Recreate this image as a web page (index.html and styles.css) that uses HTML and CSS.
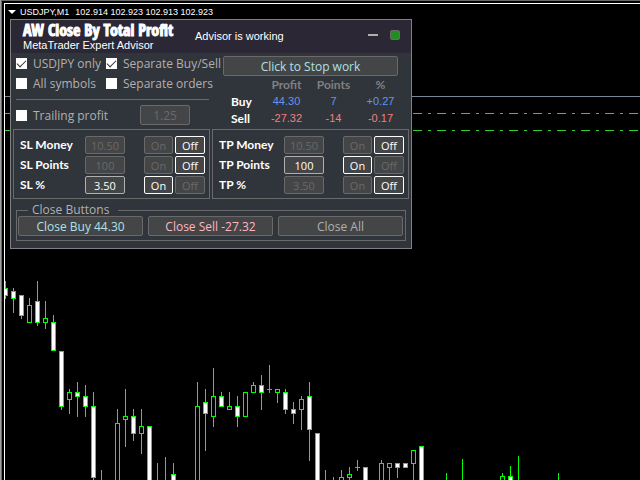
FILE: index.html
```html
<!DOCTYPE html>
<html lang="en">
<head>
    <meta charset="UTF-8">
    <meta name="viewport" content="width=device-width, initial-scale=1.0">
    <title>USDJPY,M1</title>
    <link rel="stylesheet" href="styles.css">
</head>
<body>
    <main class="chart">
        <svg class="chart-canvas" id="canvas" aria-hidden="true"></svg>

        <header class="chart-title">
            <svg class="arrow" width="8" height="4" viewBox="0 0 8 4"><path d="M0 0h8L4 4z" fill="#fff"/></svg>
            <span class="symbol">USDJPY,M1</span>
            <span>102.914 102.923 102.913 102.923</span>
        </header>

        <section class="panel">
            <header class="panel-header">
                <div class="brand">
                    <h1>AW Close By Total Profit</h1>
                    <p>MetaTrader Expert Advisor</p>
                </div>
                <p class="status">Advisor is working</p>
                <button class="minimize" aria-label="Minimize"></button>
                <span class="indicator"></span>
            </header>

            <div class="top">
                <div class="options">
                    <div class="checks">
                        <label><input type="checkbox" checked>USDJPY only</label>
                        <label><input type="checkbox" checked>Separate Buy/Sell</label>
                        <label><input type="checkbox">All symbols</label>
                        <label><input type="checkbox">Separate orders</label>
                    </div>
                    <div class="trailing">
                        <label><input type="checkbox">Trailing profit</label>
                        <input class="field" type="text" value="1.25" aria-label="Trailing profit value" disabled>
                    </div>
                </div>
                <div class="summary">
                    <button class="btn stop">Click to Stop work</button>
                    <table>
                        <thead>
                            <tr><td></td><th>Profit</th><th>Points</th><th>%</th></tr>
                        </thead>
                        <tbody>
                            <tr class="buy"><th>Buy</th><td>44.30</td><td>7</td><td>+0.27</td></tr>
                            <tr class="sell"><th>Sell</th><td>-27.32</td><td>-14</td><td>-0.17</td></tr>
                        </tbody>
                    </table>
                </div>
            </div>

            <div class="limits">
                <div class="limit-box">
                    <div class="limit">
                        <label for="sl-money">SL Money</label>
                        <input class="field" id="sl-money" type="text" value="10.50" disabled>
                        <button class="btn" disabled>On</button><button class="btn active">Off</button>
                    </div>
                    <div class="limit">
                        <label for="sl-points">SL Points</label>
                        <input class="field" id="sl-points" type="text" value="100" disabled>
                        <button class="btn" disabled>On</button><button class="btn active">Off</button>
                    </div>
                    <div class="limit">
                        <label for="sl-percent">SL %</label>
                        <input class="field" id="sl-percent" type="text" value="3.50">
                        <button class="btn active">On</button><button class="btn" disabled>Off</button>
                    </div>
                </div>
                <div class="limit-box">
                    <div class="limit">
                        <label for="tp-money">TP Money</label>
                        <input class="field" id="tp-money" type="text" value="10.50" disabled>
                        <button class="btn" disabled>On</button><button class="btn active">Off</button>
                    </div>
                    <div class="limit">
                        <label for="tp-points">TP Points</label>
                        <input class="field" id="tp-points" type="text" value="100">
                        <button class="btn active">On</button><button class="btn" disabled>Off</button>
                    </div>
                    <div class="limit">
                        <label for="tp-percent">TP %</label>
                        <input class="field" id="tp-percent" type="text" value="3.50" disabled>
                        <button class="btn" disabled>On</button><button class="btn active">Off</button>
                    </div>
                </div>
            </div>

            <fieldset class="close-buttons">
                <legend>Close Buttons</legend>
                <button class="btn close-buy">Close Buy 44.30</button>
                <button class="btn close-sell">Close Sell -27.32</button>
                <button class="btn">Close All</button>
            </fieldset>
        </section>
    </main>

    <script src="chart.js"></script>
</body>
</html>
```
FILE: styles.css
```css
* {
    box-sizing: border-box;
}

body {
    margin: 0;
    height: 100vh;
    overflow: hidden;
    background: #000;
    color: #fff;
    font-family: "Open Sans", "Noto Sans", sans-serif;
    font-size: 12px;
}

h1, p {
    margin: 0;
}

button, input {
    font: inherit;
    margin: 0;
}

/* chart window */
.chart {
    position: relative;
    height: 100%;
    overflow: hidden;
}

.chart-canvas {
    position: absolute;
    top: 0;
    left: 0;
    width: 100%;
    height: 100%;
}

.chart-title {
    position: relative;
    display: flex;
    align-items: center;
    padding: 5px 8px;
    font-family: "Liberation Sans", Arial, sans-serif;
    font-size: 9px;
    line-height: 14px;
}

.arrow {
    margin-right: 4px;
}

.symbol {
    margin-right: 6px;
}

/* advisor panel, floats over the chart */
.panel {
    position: absolute;
    top: 19px;
    left: 10px;
    width: 402px;
    padding-bottom: 7px;
    background: #30343b;
    border: 1px solid #808080;
}

.panel-header {
    display: flex;
    align-items: center;
    height: 33px;
    padding: 0 11px 4px 12px;
    background: #2b2735;
}

.brand {
    width: 172px;
}

.brand h1 {
    font-family: "Liberation Sans Narrow", "Open Sans Condensed", sans-serif;
    font-size: 16px;
    font-weight: 800;
    line-height: 17px;
    white-space: nowrap;
    -webkit-text-stroke: 1px #fff;
}

.brand p, .status {
    font-family: "Liberation Sans", Arial, sans-serif;
    font-size: 11px;
    line-height: 12px;
}

.brand {
    padding-top: 4px;
}

.status {
    flex: 1;
    padding-top: 3px;
}

.minimize {
    width: 10px;
    height: 2px;
    padding: 0;
    border: 0;
    background: #b0b0b0;
}

.indicator {
    width: 10px;
    height: 10px;
    margin-left: 12px;
    background: #228b22;
    border: 1px solid #696969;
    border-radius: 2px;
}

.top {
    display: grid;
    grid-template-columns: 207px 1fr;
    padding: 0 13px 2px 5px;
}

.checks {
    display: grid;
    grid-template-columns: 90px 1fr;
    align-content: start;
    height: 47px;
    border-bottom: 1px solid #696969;
    margin-right: 14px;
}

.checks label, .trailing label {
    display: flex;
    align-items: center;
    gap: 6px;
    height: 20px;
    color: #b0b0b0;
    white-space: nowrap;
}

.options input[type="checkbox"] {
    appearance: none;
    display: grid;
    width: 11px;
    height: 11px;
    background: #fff;
}

.options input:checked::before {
    content: "";
    width: 8px;
    height: 4px;
    margin: 2px 1px;
    border: solid #333;
    border-width: 0 0 1px 1px;
    transform: rotate(-45deg);
}

.trailing {
    display: flex;
    align-items: center;
    justify-content: space-between;
    margin-right: 33px;
    padding-top: 5px;
}

.trailing .field {
    width: 50px;
    height: 20px;
}

.btn, .field {
    padding: 0;
    color: #b0b0b0;
    background: #444546;
    border: 1px solid #696969;
    border-radius: 2px;
    text-align: center;
}

.field {
    color: #fff;
    border-color: #b0b0b0;
}

.btn.active {
    color: #fff;
    border-color: #fff;
}

.btn:disabled, .field:disabled {
    color: #696969;
    border-color: #696969;
}

.summary {
    padding-top: 3px;
}

.stop {
    width: 100%;
    height: 20px;
    color: #b0e0e6;
}

.summary table {
    width: calc(100% + 6px);
    border-collapse: collapse;
    table-layout: fixed;
    font-family: "Liberation Sans", Arial, sans-serif;
    font-size: 11px;
    line-height: 17px;
    text-align: center;
}

.summary td, .summary th {
    padding: 0;
}

.summary th {
    font-family: Lato, sans-serif;
    font-size: 12px;
}

.summary thead {
    color: #808080;
}

.summary tr > :first-child {
    width: 40px;
    padding-left: 8px;
    text-align: left;
}

.buy td {
    color: #6495ed;
}

.sell td {
    color: #f08080;
}

/* stop loss and take profit groups */
.limits {
    display: grid;
    grid-template-columns: 1fr 1fr;
    gap: 2px;
    padding: 0 2px;
}

.limit-box {
    display: grid;
    gap: 2px;
    padding: 6px 4px 4px 6px;
    border: 1px solid #696969;
}

.limit {
    display: grid;
    grid-template-columns: 65px 40px 1fr 31px 30px;
    align-items: center;
    font-size: 11px;
}

.limit label {
    font-family: Lato, sans-serif;
    font-size: 12px;
    font-weight: bold;
    line-height: 18px;
    white-space: nowrap;
}

.limit .field {
    width: 40px;
    height: 18px;
}

.limit .btn {
    height: 18px;
}

.limit .btn:first-of-type {
    grid-column: 4;
    margin-right: 2px;
}

.close-buttons {
    display: grid;
    grid-template-columns: 1fr 1fr 1fr;
    gap: 5px;
    margin: 5px 5px 0;
    padding: 0 2px 4px 1px;
    border: 1px solid #696969;
}

.close-buttons legend {
    margin-left: 10px;
    padding: 0 9px 0 4px;
    color: #b0b0b0;
    line-height: 12px;
}

.close-buttons .btn {
    height: 20px;
}

.close-buttons .close-buy {
    color: #b0e0e6;
}

.close-buttons .close-sell {
    color: #ffb6c1;
}
```
FILE: chart.js
```js
// x, high, low, body top, body bottom, filled
const candles = [
    [5, 281, 299, 288, 296, 1], [13, 288, 313, 291, 299, 1], [21, 295, 319, 295, 316, 1],
    [29, 298, 323, 305, 323, 0], [37, 281, 326, 301, 323, 1], [45, 301, 329, 318, 323, 0],
    [53, 315, 351, 322, 351, 1], [61, 351, 410, 351, 407, 1], [69, 389, 414, 392, 400, 0],
    [77, 382, 417, 392, 397, 1], [85, 385, 417, 396, 407, 1], [93, 392, 490, 406, 478, 1],
    [101, 470, 490], [117, 409, 490, 423, 490, 0], [125, 389, 447, 416, 420, 0],
    [133, 409, 441, 416, 434, 1], [141, 409, 454, 426, 434, 0], [149, 426, 490, 426, 490, 1],
    [157, 463, 490], [165, 457, 490], [173, 463, 490, 474, 490, 1],
    [197, 382, 490, 406, 490, 0], [205, 389, 451, 402, 414, 1], [213, 368, 427, 396, 417, 0],
    [221, 392, 407, 396, 407, 1], [229, 392, 410, 406, 410, 0], [237, 396, 427, 406, 417, 1],
    [245, 392, 417, 392, 417, 0], [253, 382, 393, 385, 393, 0], [261, 375, 410, 385, 393, 1],
    [269, 365, 393, 389, 390, 0], [277, 389, 403, 389, 393, 0], [285, 389, 414, 392, 410, 1],
    [293, 402, 424, 409, 414, 1], [301, 396, 430, 399, 410, 0], [309, 382, 461, 396, 430, 1],
    [317, 433, 490, 433, 490, 1], [325, 470, 490], [333, 477, 490], [341, 470, 490, 477, 490, 0],
    [349, 467, 490, 474, 478, 0], [357, 460, 471, 467, 468, 0], [365, 467, 490, 467, 490, 1],
    [381, 460, 490, 463, 490, 0], [389, 463, 490, 463, 468, 0], [397, 463, 478, 463, 468, 1],
    [405, 463, 468, 463, 468, 1], [413, 450, 490, 450, 464, 0], [421, 446, 490, 446, 490, 1],
    [446, 473, 490], [462, 459, 490], [502, 473, 490, 476, 490, 0], [510, 466, 490, 476, 490, 1],
    [518, 456, 490], [558, 473, 490]
];

const rect = (x, y, w, h, fill) =>
    `<rect x="${x}" y="${y}" width="${w}" height="${h}" fill="${fill}"/>`;

let shapes = '';
candles.forEach(([x, high, low, top, bottom, filled]) => {
    shapes += rect(x, high, 1, low - high, '#00ff00');
    if (top === undefined) return;
    shapes += rect(x - 2, top, 5, bottom - top, '#00ff00');
    if (bottom - top > 2) {
        shapes += rect(x - 1, top + 1, 3, bottom - top - 2, filled ? '#fff' : '#000');
    }
});

// price levels
shapes += rect(5, 96, '100%', 1, '#778899');
[113, 130].forEach(y => {
    shapes += `<line x1="5" x2="100%" y1="${y}.5" y2="${y}.5" stroke="#32cd32" stroke-dasharray="9 6 3 6"/>`;
});

// window frame
shapes += rect(0, 0, 4, '100%', '#000') + rect(0, 0, '100%', 1, '#696969');
shapes += rect(0, 0, 1, '100%', '#a0a0a0') + rect(1, 0, 1, '100%', '#696969');
shapes += rect(4, 3, '100%', 1, '#fff') + rect(4, 3, 1, '100%', '#fff');

document.getElementById('canvas').innerHTML = shapes;
```
